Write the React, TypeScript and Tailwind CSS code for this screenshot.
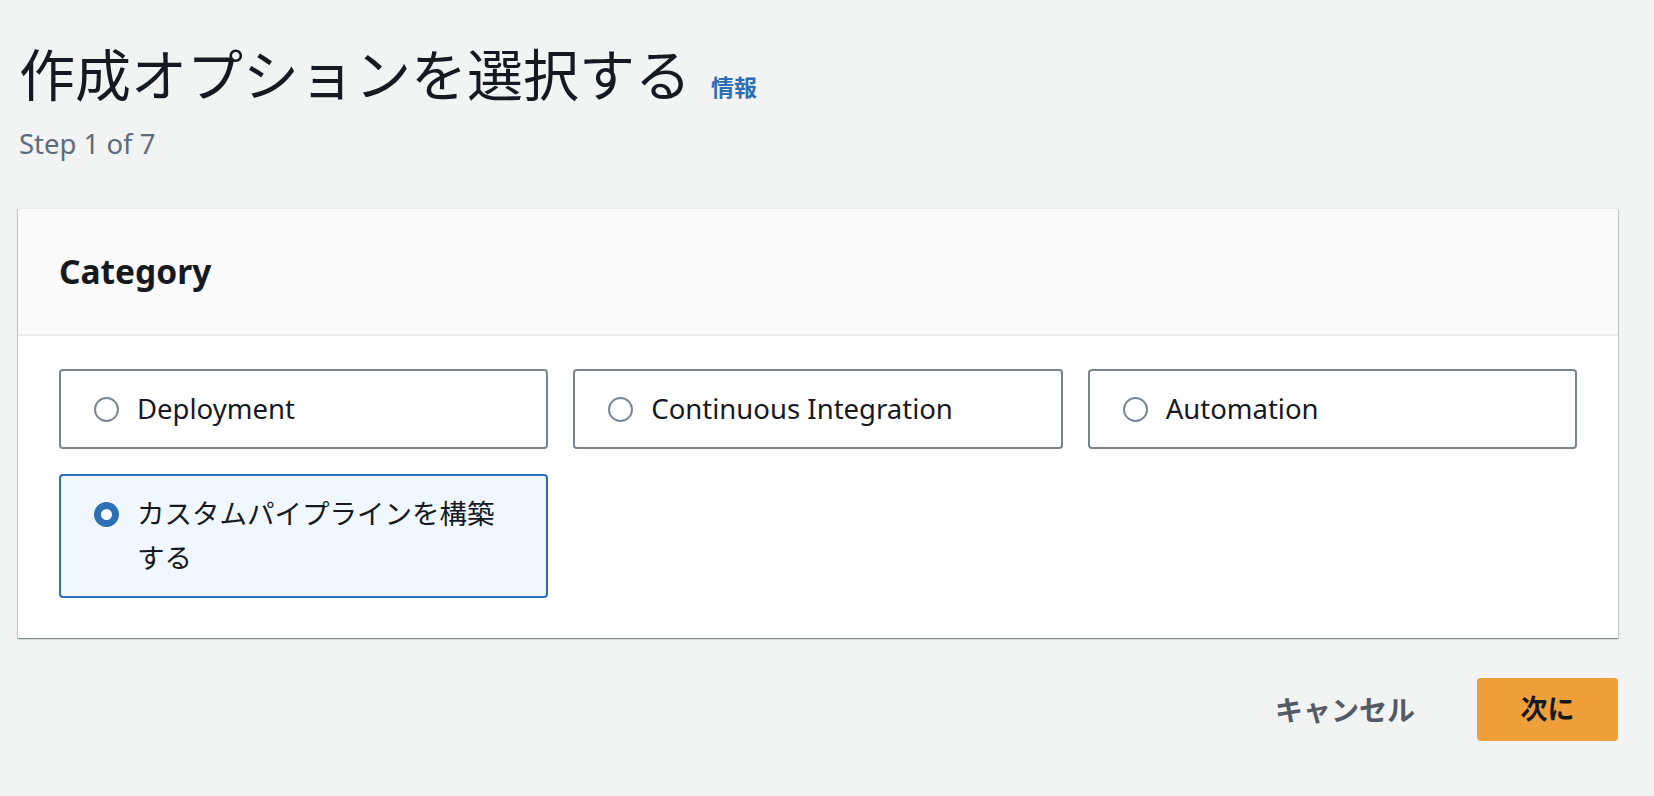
import { useState } from "react";

const options = [
  { id: "deployment", label: "Deployment" },
  { id: "ci", label: "Continuous Integration" },
  { id: "automation", label: "Automation" },
  { id: "custom", label: "カスタムパイプラインを構築する" },
];

const font = { fontFamily: '"Noto Sans", "Noto Sans CJK JP", sans-serif' };

export default function App() {
  const [selected, setSelected] = useState("custom");

  return (
    <div className="min-h-[796px] bg-[#f2f3f3] pl-[18px] pr-[36px] pt-[38px] text-[#16191f]" style={font}>
      <div className="flex items-baseline gap-[20px] pl-[1px]">
        <h1 className="text-[56px] leading-[72px] font-normal text-[#16191f]">作成オプションを選択する</h1>
        <a className="text-[23px] font-bold text-[#2f6db5]">情報</a>
      </div>
      <p className="mt-[16px] pl-[1px] text-[27.5px] leading-[36px] text-[#5f6b7a]">Step 1 of 7</p>

      <div className="mt-[46px] bg-white border-t border-[#eaeded] shadow-[0_1px_1px_0_rgba(0,28,36,0.3),1px_1px_1px_0_rgba(0,28,36,0.15),-1px_1px_1px_0_rgba(0,28,36,0.15)]">
        <div className="flex h-[127px] items-center border-b-2 border-[#eaeded] bg-[#fafafa] px-[41px]">
          <h2 className="text-[33.5px] font-bold leading-none">Category</h2>
        </div>
        <div className="grid grid-cols-3 gap-x-[25px] gap-y-[25px] px-[41px] pt-[33px] pb-[40px]">
          {options.map((o) => {
            const on = selected === o.id;
            return (
              <label
                key={o.id}
                onClick={() => setSelected(o.id)}
                className={
                  "flex cursor-pointer items-start gap-[18px] rounded-[4px] border-2 px-[33px] py-[16px] " +
                  (on ? "border-[#2f6fb5] bg-[#f1f8fd]" : "border-[#7b838c] bg-white")
                }
              >
                <span className="flex h-[44px] shrink-0 items-center">
                  {on ? (
                    <span className="block h-[25px] w-[25px] rounded-full border-[7px] border-[#2f6fb5] bg-white" />
                  ) : (
                    <span className="block h-[25px] w-[25px] rounded-full border-2 border-[#7d8590] bg-white" />
                  )}
                </span>
                <span className="text-[27.5px] leading-[44px] text-[#16191f]">{o.label}</span>
              </label>
            );
          })}
        </div>
      </div>

      <div className="mt-[40px] flex items-center justify-end gap-[40px]">
        <button className="px-[22px] text-[28px] font-bold text-[#545b64]">キャンセル</button>
        <button className="h-[63px] w-[141px] rounded-[4px] bg-[#f0a03b] text-[27px] font-bold text-[#16191f]">次に</button>
      </div>
    </div>
  );
}
